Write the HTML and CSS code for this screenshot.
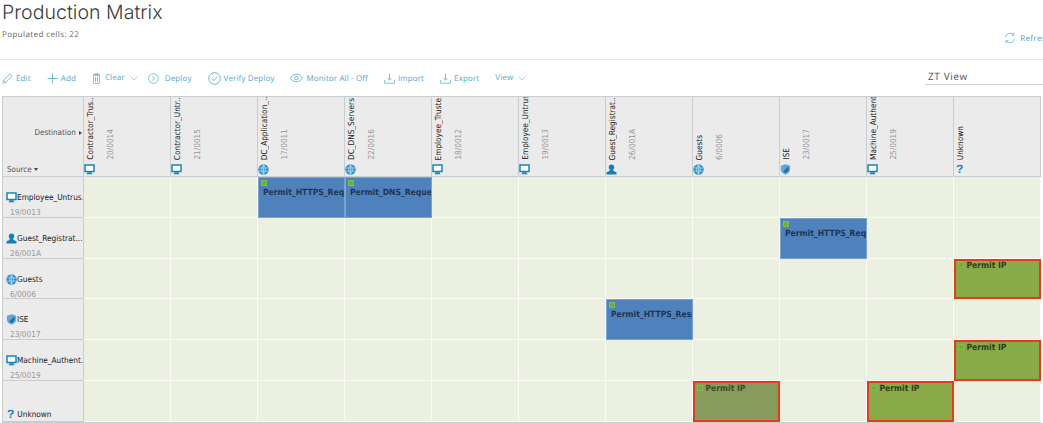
FILE: index.html
```html
<!DOCTYPE html>
<html lang="en">
<head>
<meta charset="utf-8">
<title>Production Matrix</title>
<link rel="stylesheet" href="styles.css">
</head>
<body>
<svg class="defs" width="0" height="0" aria-hidden="true">
  <symbol id="monitor" viewBox="0 0 11 11"><path d="M1 1h9v6.6H1z" fill="#fff" stroke="#1685bd" stroke-width="1.5"/><path d="M3.2 8.2h4.6v1.2l1 .8H2.2l1-.8z" fill="#1685bd"/></symbol>
  <symbol id="globe" viewBox="0 0 11 11"><circle cx="5.5" cy="5.5" r="5.2" fill="#2b8fcf"/><path d="M1 4h9M1 7h9M5.5.5v10M5.5.8C3 3.5 3 7.5 5.5 10.2M5.5.8C8 3.5 8 7.5 5.5 10.2" fill="none" stroke="#d5ebf7" stroke-width=".6"/></symbol>
  <symbol id="person" viewBox="0 0 11 11"><circle cx="5.5" cy="3.2" r="2.7" fill="#1280bb"/><path d="M3.8 5.5h3.4l.4 1.4 2.9 1.4v2.2H.5V8.3l2.9-1.4z" fill="#1280bb"/></symbol>
  <symbol id="shield" viewBox="0 0 11 11"><path d="M5.5.3l4.6 1.5v3.500c0 2.800-2 4.500-4.600 5.500C2.900 9.800.9 8.100.9 5.300V1.800z" fill="#5aa7d8"/><path d="M8.200 2.600L3.300 7.400l2.200 1.600c1.800-.9 3-2.300 3-4.200z" fill="#1c6ea4"/></symbol>
  <symbol id="edit" viewBox="0 0 11 11"><path d="M.8 10.200l.7-3L8 .8l2.200 2.200-6.500 6.400zM1.500 7.200l2.200 2.200" fill="none" stroke="#62b3d4" stroke-width=".8"/></symbol>
  <symbol id="plus" viewBox="0 0 11 11"><path d="M5.500.5v10M.5 5.500h10" fill="none" stroke="#62b3d4" stroke-width=".9"/></symbol>
  <symbol id="trash" viewBox="0 0 9 11"><path d="M1.500 2.500h6v7.300a.8.8 0 01-.8.8H2.300a.8.8 0 01-.8-.8zM1 1.500h7M3 .6h3M3.500 4v5M5.500 4v5" fill="none" stroke="#62b3d4" stroke-width=".8"/></symbol>
  <symbol id="deploy" viewBox="0 0 11 11"><circle cx="5.500" cy="5.500" r="4.900" fill="none" stroke="#62b3d4" stroke-width=".8"/><path d="M4.500 3.300l2.300 2.200-2.300 2.200" fill="none" stroke="#62b3d4" stroke-width=".8"/></symbol>
  <symbol id="verify" viewBox="0 0 11 11"><circle cx="5.500" cy="5.500" r="4.900" fill="none" stroke="#62b3d4" stroke-width=".8"/><path d="M3.200 5.600l1.700 1.700 3-3.200" fill="none" stroke="#62b3d4" stroke-width=".8"/></symbol>
  <symbol id="eye" viewBox="0 0 12 9"><path d="M.5 4.500C2 2 3.800 1 6 1s4 1 5.500 3.500C10 7 8.200 8 6 8S2 7 .5 4.500z" fill="none" stroke="#62b3d4" stroke-width=".8"/><circle cx="6" cy="4.500" r="1.700" fill="none" stroke="#62b3d4" stroke-width=".8"/></symbol>
  <symbol id="tray" viewBox="0 0 11 11"><path d="M5.500.5v6.500M3.300 5l2.200 2.200L7.700 5M.6 6.800v3.400h9.800V6.800" fill="none" stroke="#62b3d4" stroke-width=".8"/></symbol>
  <symbol id="chev" viewBox="0 0 8 5"><path d="M.5.800L4 4l3.500-3.200" fill="none" stroke="#9cc5d8" stroke-width=".8"/></symbol>
  <symbol id="refresh" viewBox="0 0 12 12"><path d="M1.500 5.200A4.600 4.600 0 019.700 3M10.500 6.800A4.600 4.600 0 012.300 9M9.900.8V3.200H7.500M2.100 11.200V8.800h2.400" fill="none" stroke="#62b3d4" stroke-width=".8"/></symbol>
</svg>

<header class="page-head">
  <h1 class="title">Production Matrix</h1>
  <div class="sub-row">
    <span class="populated">Populated cells: 22</span>
    <a class="refresh"><svg class="i12"><use href="#refresh"/></svg>Refresh</a>
  </div>
</header>

<nav class="toolbar">
  <a class="tool"><svg class="i11"><use href="#edit"/></svg>Edit</a>
  <a class="tool"><svg class="i11"><use href="#plus"/></svg>Add</a>
  <a class="tool tool-menu"><svg class="i-trash"><use href="#trash"/></svg><span class="raised">Clear</span><svg class="chev"><use href="#chev"/></svg></a>
  <a class="tool"><svg class="i11"><use href="#deploy"/></svg><span class="wide">Deploy</span></a>
  <a class="tool"><svg class="i-13"><use href="#verify"/></svg>Verify Deploy</a>
  <a class="tool"><svg class="i-eye"><use href="#eye"/></svg>Monitor All - Off</a>
  <a class="tool"><svg class="i11"><use href="#tray"/></svg>Import</a>
  <a class="tool"><svg class="i11"><use href="#tray"/></svg>Export</a>
  <a class="tool"><span class="raised">View</span><svg class="chev"><use href="#chev"/></svg></a>
  <div class="view-box">ZT View</div>
</nav>

<main class="matrix">
  <div class="corner"><span class="dest">Destination <i class="tri-r"></i></span><span class="src">Source <i class="tri-d"></i></span></div>

  <div class="col-head"><div class="col-labels"><span class="col-name">Contractor_Trus...</span><span class="col-id">20/0014</span></div><svg class="icon"><use href="#monitor"/></svg></div>
  <div class="col-head"><div class="col-labels"><span class="col-name">Contractor_Untr...</span><span class="col-id">21/0015</span></div><svg class="icon"><use href="#monitor"/></svg></div>
  <div class="col-head"><div class="col-labels"><span class="col-name">DC_Application_...</span><span class="col-id">17/0011</span></div><svg class="icon"><use href="#globe"/></svg></div>
  <div class="col-head"><div class="col-labels"><span class="col-name">DC_DNS_Servers</span><span class="col-id">22/0016</span></div><svg class="icon"><use href="#globe"/></svg></div>
  <div class="col-head"><div class="col-labels"><span class="col-name">Employee_Truste...</span><span class="col-id">18/0012</span></div><svg class="icon"><use href="#monitor"/></svg></div>
  <div class="col-head"><div class="col-labels"><span class="col-name">Employee_Untrus...</span><span class="col-id">19/0013</span></div><svg class="icon"><use href="#monitor"/></svg></div>
  <div class="col-head"><div class="col-labels"><span class="col-name">Guest_Registrat...</span><span class="col-id">26/001A</span></div><svg class="icon"><use href="#person"/></svg></div>
  <div class="col-head"><div class="col-labels"><span class="col-name">Guests</span><span class="col-id">6/0006</span></div><svg class="icon"><use href="#globe"/></svg></div>
  <div class="col-head"><div class="col-labels"><span class="col-name">ISE</span><span class="col-id">23/0017</span></div><svg class="icon"><use href="#shield"/></svg></div>
  <div class="col-head"><div class="col-labels"><span class="col-name">Machine_Authent...</span><span class="col-id">25/0019</span></div><svg class="icon"><use href="#monitor"/></svg></div>
  <div class="col-head"><div class="col-labels"><span class="col-name">Unknown</span></div><span class="q">?</span></div>

  <div class="row-head"><div class="row-name"><svg class="icon"><use href="#monitor"/></svg>Employee_Untrus...</div><div class="row-id">19/0013</div></div>
  <div class="cell"></div><div class="cell"></div>
  <div class="cell blue"><i class="badge"></i><b class="policy">Permit_HTTPS_Request</b></div>
  <div class="cell blue"><i class="badge"></i><b class="policy">Permit_DNS_Request</b></div>
  <div class="cell"></div><div class="cell"></div><div class="cell"></div><div class="cell"></div><div class="cell"></div><div class="cell"></div><div class="cell"></div>

  <div class="row-head"><div class="row-name"><svg class="icon"><use href="#person"/></svg>Guest_Registrat...</div><div class="row-id">26/001A</div></div>
  <div class="cell"></div><div class="cell"></div><div class="cell"></div><div class="cell"></div><div class="cell"></div><div class="cell"></div><div class="cell"></div><div class="cell"></div>
  <div class="cell blue"><i class="badge"></i><b class="policy">Permit_HTTPS_Request</b></div>
  <div class="cell"></div><div class="cell"></div>

  <div class="row-head"><div class="row-name"><svg class="icon"><use href="#globe"/></svg>Guests</div><div class="row-id">6/0006</div></div>
  <div class="cell"></div><div class="cell"></div><div class="cell"></div><div class="cell"></div><div class="cell"></div><div class="cell"></div><div class="cell"></div><div class="cell"></div><div class="cell"></div><div class="cell"></div>
  <div class="cell green"><i class="badge"></i><span class="permit">Permit IP</span></div>

  <div class="row-head"><div class="row-name"><svg class="icon"><use href="#shield"/></svg>ISE</div><div class="row-id">23/0017</div></div>
  <div class="cell"></div><div class="cell"></div><div class="cell"></div><div class="cell"></div><div class="cell"></div><div class="cell"></div>
  <div class="cell blue"><i class="badge"></i><b class="policy">Permit_HTTPS_Response</b></div>
  <div class="cell"></div><div class="cell"></div><div class="cell"></div><div class="cell"></div>

  <div class="row-head"><div class="row-name"><svg class="icon"><use href="#monitor"/></svg>Machine_Authent...</div><div class="row-id">25/0019</div></div>
  <div class="cell"></div><div class="cell"></div><div class="cell"></div><div class="cell"></div><div class="cell"></div><div class="cell"></div><div class="cell"></div><div class="cell"></div><div class="cell"></div><div class="cell"></div>
  <div class="cell green"><i class="badge"></i><span class="permit">Permit IP</span></div>

  <div class="row-head row-last"><div class="row-name"><span class="q q-row">?</span>Unknown</div></div>
  <div class="cell"></div><div class="cell"></div><div class="cell"></div><div class="cell"></div><div class="cell"></div><div class="cell"></div><div class="cell"></div>
  <div class="cell green muted"><i class="badge"></i><span class="permit">Permit IP</span></div>
  <div class="cell"></div>
  <div class="cell green"><i class="badge"></i><span class="permit">Permit IP</span></div>
  <div class="cell"></div>
</main>
</body>
</html>
```

FILE: styles.css
```css
* { box-sizing: border-box; }
html, body { margin: 0; height: 423px; overflow: hidden; background: #fff; }
body { font-family: "Open Sans", sans-serif; color: #444; width: 1043px; text-rendering: geometricPrecision; }
.defs { position: absolute; }
svg { display: block; flex: none; }

.page-head { padding-left: 2px; height: 60px; border-bottom: 1px solid #e8e8e8; }
.title { margin: 0; font-family: "Inter", sans-serif; font-weight: 300; font-size: 19.5px; line-height: 24px; letter-spacing: .05px; color: #3c3c3c; }
.sub-row { display: flex; justify-content: space-between; align-items: flex-start; margin-top: 5px; }
.populated { font-size: 8px; line-height: 12px; letter-spacing: .4px; color: #666; }
.refresh { display: flex; align-items: center; gap: 4px; font-size: 8px; letter-spacing: .3px; color: #3fa0c8; margin-right: -8px; margin-top: 3px; }
.i12 { width: 12px; height: 12px; }

.toolbar { display: flex; align-items: center; gap: 16px; height: 36px; padding-left: 2px; }
.tool { display: flex; align-items: center; gap: 3px; font-size: 8px; letter-spacing: .12px; color: #53a9cd; white-space: nowrap; }
.tool-menu { margin-right: -6px; }
.i11 { width: 11px; height: 11px; }
.i-13 { width: 13px; height: 13px; }
.i-eye { width: 13px; height: 10px; }
.i-trash { width: 9px; height: 11px; margin-right: 1px; }
.wide { margin-left: 3px; }
.raised { margin-top: -2px; }
.chev { width: 8px; height: 5px; margin-left: 2px; }
.view-box { margin-left: auto; width: 118px; height: 15px; margin-top: -2px; padding-left: 3px; font-size: 10px; line-height: 13px; letter-spacing: .6px; color: #555; border-bottom: 1.5px solid #cfcfcf; }

.matrix { display: grid; grid-template-columns: 82px repeat(11, 87px); grid-template-rows: 81px repeat(6, 1fr); height: 327px; margin-left: 2px; width: 1039px; font-family: "DejaVu Sans", sans-serif; border-bottom: 1px solid #c9cdd0; }

.corner { display: flex; flex-direction: column; background: #ebebeb; border: 1px solid #c9cdd0; padding: 0 1px 2px 4px; }
.dest { margin-top: 31px; text-align: right; font-size: 8px; color: #555; font-stretch: condensed; }
.src { margin-top: auto; font-size: 8px; color: #555; font-stretch: condensed; }
.tri-r { display: inline-block; border-left: 3px solid #444; border-top: 2px solid transparent; border-bottom: 2px solid transparent; margin-left: 1px; }
.tri-d { display: inline-block; border-top: 3px solid #444; border-left: 2.5px solid transparent; border-right: 2.5px solid transparent; vertical-align: 1px; }

.col-head { display: flex; flex-direction: column; justify-content: flex-end; background: #ebebeb; border-top: 1px solid #c9cdd0; border-right: 1px solid #c9cdd0; border-bottom: 1px solid #c9cdd0; padding: 0 0 1px 0; overflow: hidden; }
.col-labels { display: flex; align-items: flex-end; gap: 9px; padding-left: 1px; margin-bottom: 4px; }
.col-name, .col-id { writing-mode: vertical-rl; transform: rotate(180deg); white-space: nowrap; font-size: 8.2px; line-height: 11px; font-stretch: condensed; }
.col-name { color: #222; width: 11px; }
.col-id { color: #999; width: 11px; }
.icon { width: 11px; height: 11px; }
.q { font-family: "Liberation Sans", sans-serif; font-weight: 700; font-size: 12px; line-height: 11px; color: #1280bb; padding-left: 2px; }

.row-head { display: flex; flex-direction: column; background: #ebebeb; border: 1px solid #c9cdd0; border-top: 0; padding: 15px 0 0 3px; overflow: hidden; }
.row-name { display: flex; align-items: center; font-size: 8.2px; line-height: 11px; color: #222; white-space: nowrap; font-stretch: condensed; }
.row-id { margin: 4px 0 0 4px; font-size: 8.2px; line-height: 10px; color: #999; font-stretch: condensed; }
.row-last { justify-content: flex-end; padding: 0 0 1px 4px; }
.q-row { padding: 0 3px 0 0; }

.cell { background: #ecf0e0; border-right: 1px solid #fbfcf7; border-bottom: 1px solid #fbfcf7; overflow: hidden; min-width: 0; }
.blue { background: #4f81bd; border: 1px solid #7ba3d0; padding: 2px 0 0 2px; }
.badge { display: block; flex: none; width: 6px; height: 6px; background: #6fb03c; border: 1px solid #7fc04c; }
.policy { display: block; margin: 1px 0 0 2px; font-size: 8.5px; line-height: 12px; color: #1f3552; white-space: nowrap; font-stretch: condensed; }
.green { display: flex; align-items: flex-start; gap: 3px; background: #8aaa4a; border: 2.5px solid #e63a1c; padding: 1.5px 0 0 1.5px; }
.muted { background: #869b5c; }
.permit { font-size: 8.5px; line-height: 9px; font-weight: 700; color: #2f3d1c; white-space: nowrap; font-stretch: condensed; }
.muted .permit { color: #3d4a28; }
```
